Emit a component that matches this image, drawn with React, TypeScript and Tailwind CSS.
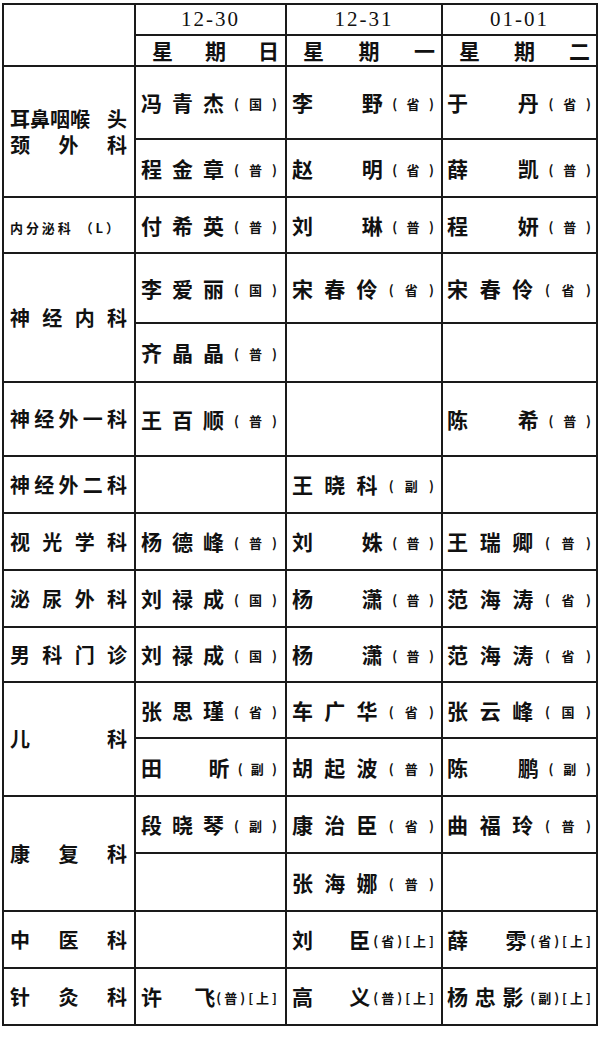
import React from "react";

const B = "border-r-2 border-b-2 border-[#1a1a1a]";
const PAD: Record<number, string> = {
  1: "pl-[5px] pr-[8px]",
  2: "pl-[5px] pr-[7px]",
  3: "pl-[4px] pr-[5px]",
};

type N = { n: string; s: string; x?: boolean } | null;

function Suffix({ s, x }: { s: string; x?: boolean }) {
  if (x) {
    return (
      <span className="flex items-center gap-[3px] text-[13px] leading-none font-bold translate-y-[1px]">
        <span>(</span>
        <span>{s}</span>
        <span>)</span>
        <span>[</span>
        <span>上</span>
        <span>]</span>
      </span>
    );
  }
  return (
    <>
      <span className="text-[13px] leading-none font-bold translate-y-[1px]">(</span>
      <span className="text-[13px] leading-none font-bold translate-y-[1px]">{s}</span>
      <span className="text-[13px] leading-none font-bold translate-y-[1px]">)</span>
    </>
  );
}

function NameCell({ d, col, span }: { d: N; col: number; span?: boolean }) {
  const rs = span ? "row-span-2" : "";
  if (!d) return <div className={`${B} ${rs}`} />;
  const chars = d.n.length === 2 ? [d.n[0], "_", d.n[1]] : d.n.split("");
  return (
    <div className={`${B} ${rs} ${PAD[col]} flex items-center justify-between`}>
      {chars.map((c, i) =>
        c === "_" ? (
          <span key={i} className="w-[30px]" />
        ) : (
          <span key={i} className="text-[21px] leading-none font-bold">
            {c}
          </span>
        )
      )}
      <Suffix s={d.s} x={d.x} />
    </div>
  );
}

function Dept({ parts, span }: { parts: string[]; span?: boolean }) {
  return (
    <div className={`${B} ${span ? "row-span-2" : ""} flex items-center pl-[6px] pr-[7px]`}>
      <div className="flex w-full justify-between">
        {parts.map((p, i) => (
          <span key={i} className="text-[20px] leading-none font-bold">
            {p}
          </span>
        ))}
      </div>
    </div>
  );
}

type Row = { dept: React.ReactNode; a: N[]; b?: N[] };

const n = (name: string, s: string, x?: boolean): N => ({ n: name, s, x });

export default function App() {
  const rows: Row[] = [
    {
      dept: (
        <div className={`${B} row-span-2 flex flex-col justify-center gap-[6px] pl-[6px] pr-[7px]`}>
          <div className="flex justify-between text-[20px] leading-none font-bold">
            <span>耳鼻咽喉</span>
            <span>头</span>
          </div>
          <div className="flex justify-between text-[20px] leading-none font-bold">
            <span>颈</span>
            <span>外</span>
            <span>科</span>
          </div>
        </div>
      ),
      a: [n("冯青杰", "国"), n("李野", "省"), n("于丹", "省")],
      b: [n("程金章", "普"), n("赵明", "省"), n("薛凯", "普")],
    },
    {
      dept: (
        <div className={`${B} flex items-center pl-[6px] pr-[15px]`}>
          <div className="flex w-full justify-between text-[13px] leading-none font-bold translate-y-[2px]">
            <span>内</span>
            <span>分</span>
            <span>泌</span>
            <span>科</span>
            <span className="ml-[6px]">（</span>
            <span>L</span>
            <span>）</span>
          </div>
        </div>
      ),
      a: [n("付希英", "普"), n("刘琳", "普"), n("程妍", "普")],
    },
    {
      dept: <Dept parts={["神", "经", "内", "科"]} span />,
      a: [n("李爱丽", "国"), n("宋春伶", "省"), n("宋春伶", "省")],
      b: [n("齐晶晶", "普"), null, null],
    },
    {
      dept: <Dept parts={["神", "经", "外", "一", "科"]} />,
      a: [n("王百顺", "普"), null, n("陈希", "普")],
    },
    {
      dept: <Dept parts={["神", "经", "外", "二", "科"]} />,
      a: [null, n("王晓科", "副"), null],
    },
    {
      dept: <Dept parts={["视", "光", "学", "科"]} />,
      a: [n("杨德峰", "普"), n("刘姝", "普"), n("王瑞卿", "普")],
    },
    {
      dept: <Dept parts={["泌", "尿", "外", "科"]} />,
      a: [n("刘禄成", "国"), n("杨潇", "普"), n("范海涛", "省")],
    },
    {
      dept: <Dept parts={["男", "科", "门", "诊"]} />,
      a: [n("刘禄成", "国"), n("杨潇", "普"), n("范海涛", "省")],
    },
    {
      dept: <Dept parts={["儿", "科"]} span />,
      a: [n("张思瑾", "省"), n("车广华", "省"), n("张云峰", "国")],
      b: [n("田昕", "副"), n("胡起波", "普"), n("陈鹏", "副")],
    },
    {
      dept: <Dept parts={["康", "复", "科"]} span />,
      a: [n("段晓琴", "副"), n("康治臣", "省"), n("曲福玲", "普")],
      b: [null, n("张海娜", "普"), null],
    },
    {
      dept: <Dept parts={["中", "医", "科"]} />,
      a: [null, n("刘臣", "省", true), n("薛雰", "省", true)],
    },
    {
      dept: <Dept parts={["针", "灸", "科"]} />,
      a: [n("许飞", "普", true), n("高义", "普", true), n("杨忠影", "副", true)],
    },
  ];

  const dates = ["12-30", "12-31", "01-01"];
  const weeks = [
    ["星", "期", "日"],
    ["星", "期", "一"],
    ["星", "期", "二"],
  ];

  return (
    <div className="min-h-[1052px] w-[600px] bg-white pt-[3px] pl-[2px] text-[#111] font-['Noto_Sans_CJK_SC',sans-serif]">
      <div className="grid w-[596px] grid-cols-[132px_151px_156px_155px] grid-rows-[31px_31px_73px_58px_56px_70px_59px_74px_57px_57px_57px_55px_56px_58px_57px_58px_57px_57px] border-l-2 border-t-2 border-[#1a1a1a]">
        <div className={`${B} row-span-2`} />
        {dates.map((d) => (
          <div
            key={d}
            className={`${B} flex items-center justify-center font-['Liberation_Serif',serif] text-[21px] leading-none tracking-[2px]`}
          >
            {d}
          </div>
        ))}
        {weeks.map((w, i) => (
          <div key={i} className={`${B} flex items-center justify-between pl-[16px] pr-[6px]`}>
            {w.map((c, j) => (
              <span key={j} className="text-[21px] leading-none font-bold">
                {c}
              </span>
            ))}
          </div>
        ))}
        {rows.map((r, i) => (
          <React.Fragment key={i}>
            {r.dept}
            {r.a.map((d, j) => (
              <NameCell key={`a${j}`} d={d} col={j + 1} />
            ))}
            {r.b &&
              r.b.map((d, j) => <NameCell key={`b${j}`} d={d} col={j + 1} />)}
          </React.Fragment>
        ))}
      </div>
    </div>
  );
}
